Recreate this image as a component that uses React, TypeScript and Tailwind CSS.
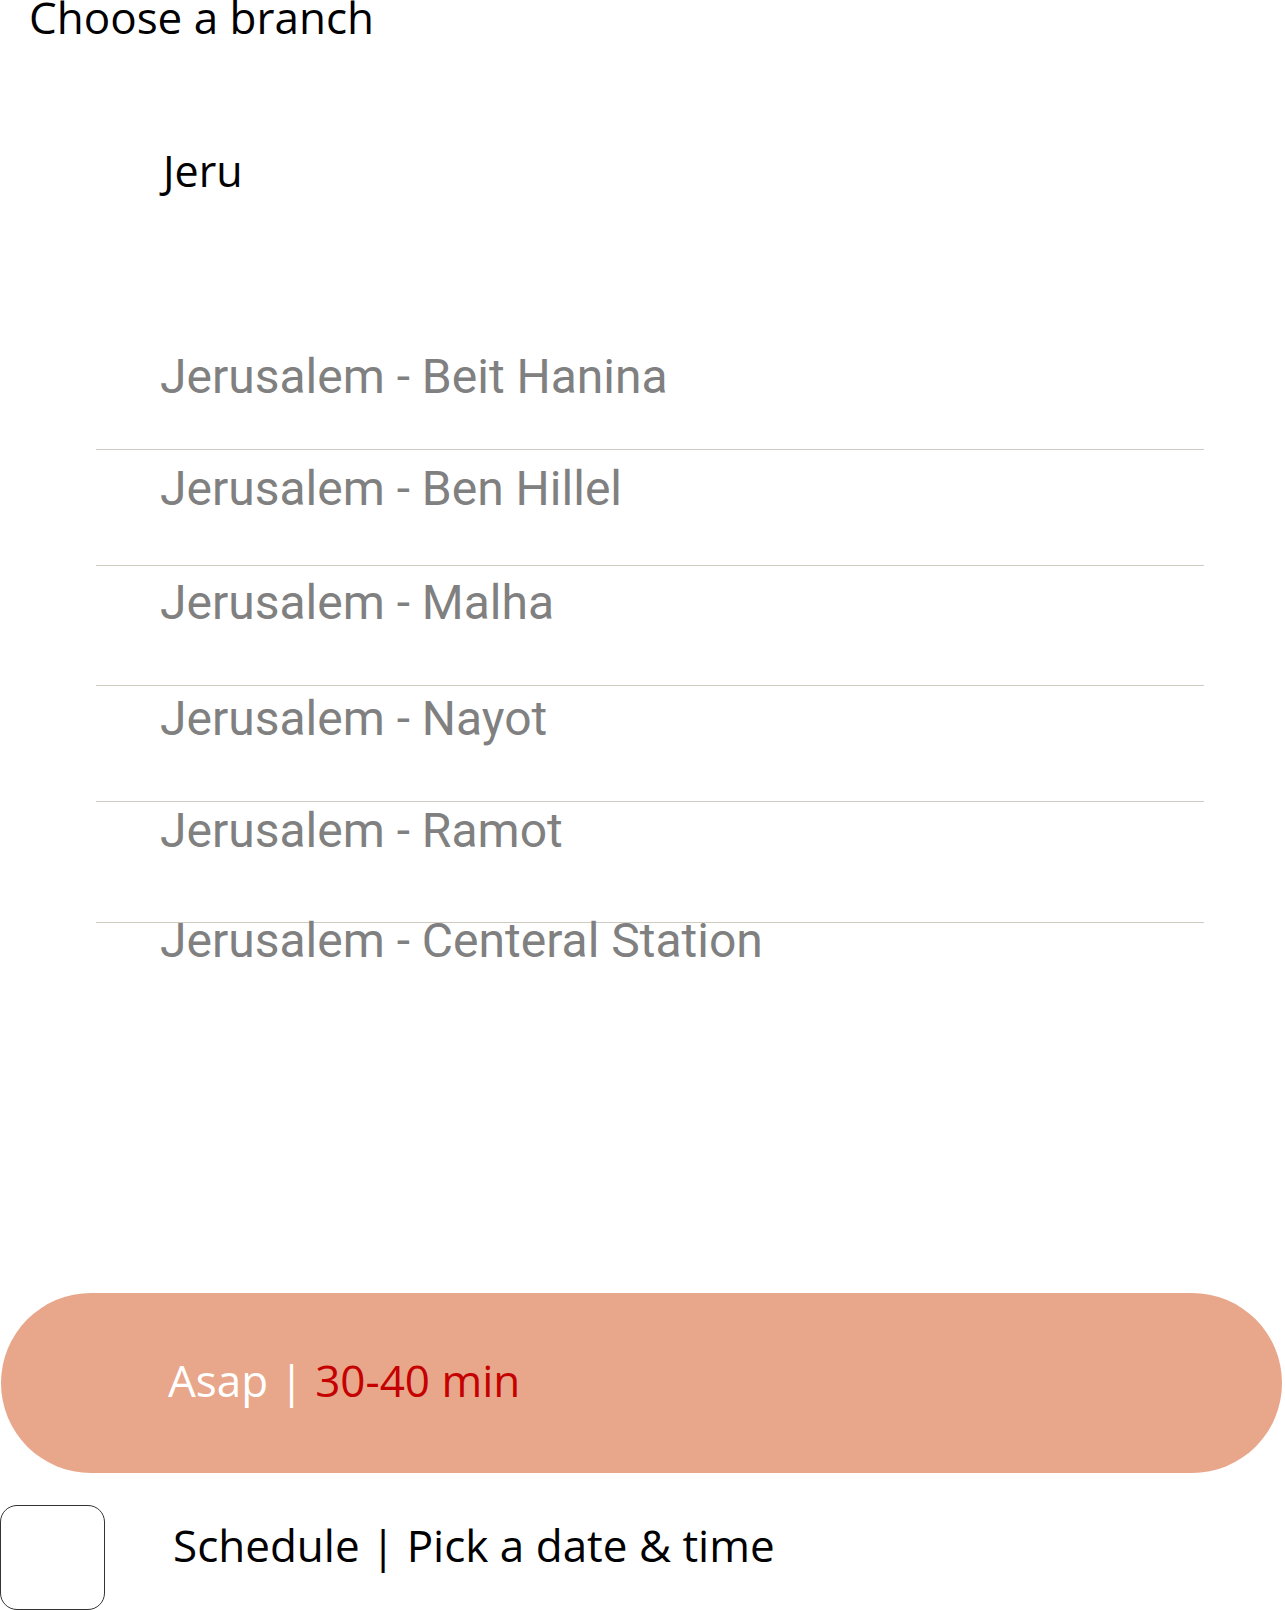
const branches = [
  { name: "Jerusalem - Beit Hanina", row: "border-b border-[#cfcbc0]", text: "pt-[0px] pb-[48px]" },
  { name: "Jerusalem - Ben Hillel", row: "border-b border-[#cfcbc0]", text: "pt-[15px] pb-[52px]" },
  { name: "Jerusalem - Malha", row: "border-b border-[#cfcbc0]", text: "pt-[13px] pb-[58px]" },
  { name: "Jerusalem - Nayot", row: "border-b border-[#cfcbc0]", text: "pt-[9px] pb-[58px]" },
  { name: "Jerusalem - Ramot", row: "border-b border-[#cfcbc0]", text: "pt-[5px] pb-[67px]" },
  { name: "Jerusalem - Centeral Station", row: "", text: "mt-[-6px]" },
];

export default function App() {
  return (
    <div className="w-[1285px] h-[1610px] overflow-hidden bg-white font-['Open_Sans',sans-serif]">
      {/* Header */}
      <h1 className="pl-[29px] mt-[-5px] text-[44px] leading-none font-normal text-black">
        Choose a branch
      </h1>

      {/* Search value */}
      <div className="pl-[163px] mt-[110px] text-[43px] leading-none text-black">Jeru</div>

      {/* Results */}
      <ul className="ml-[96px] w-[1108px] mt-[161px] font-['Roboto',sans-serif]">
        {branches.map((b) => (
          <li key={b.name} className={b.row}>
            <div className={`pl-[64px] text-[48px] leading-none text-[#808080] ${b.text}`}>{b.name}</div>
          </li>
        ))}
      </ul>

      {/* Asap option */}
      <div className="ml-[1px] mt-[328px] w-[1281px] h-[180px] rounded-full bg-[#e8a68a] flex items-center pl-[167px] pb-[6px]">
        <span className="text-[44px] leading-none text-white">
          Asap | <span className="text-[#c40000]">30-40 min</span>
        </span>
      </div>

      {/* Schedule option */}
      <div className="mt-[32px] flex items-start">
        <div className="w-[105px] h-[105px] shrink-0 rounded-[17px] border border-[#333]" />
        <span className="ml-[68px] mt-[18px] text-[44px] leading-none text-black">
          Schedule | Pick a date &amp; time
        </span>
      </div>
    </div>
  );
}
